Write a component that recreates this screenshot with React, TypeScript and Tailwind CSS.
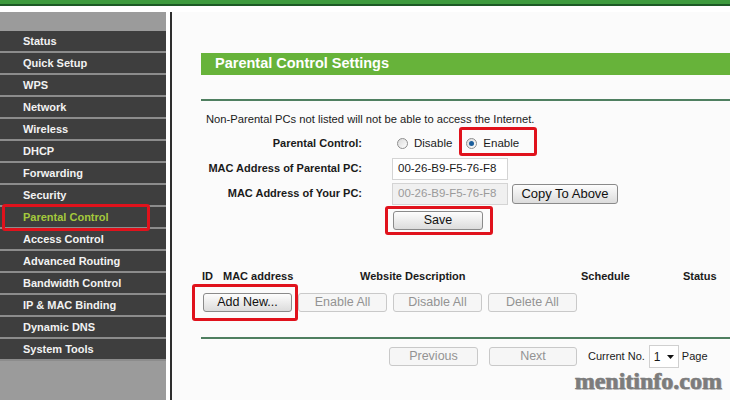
import React from "react";

const menu = [
  "Status",
  "Quick Setup",
  "WPS",
  "Network",
  "Wireless",
  "DHCP",
  "Forwarding",
  "Security",
  "Parental Control",
  "Access Control",
  "Advanced Routing",
  "Bandwidth Control",
  "IP & MAC Binding",
  "Dynamic DNS",
  "System Tools",
];

function Btn({
  children,
  className = "",
  disabled = false,
}: {
  children: React.ReactNode;
  className?: string;
  disabled?: boolean;
}) {
  return (
    <div
      className={
        "flex items-center justify-center rounded-[3px] border " +
        (disabled
          ? "border-[#c9c9c9] bg-[#f6f6f6] text-[#939393] "
          : "border-[#8a8a8a] bg-linear-to-b from-[#fdfdfd] to-[#dcdcdc] text-[#111] ") +
        className
      }
    >
      {children}
    </div>
  );
}

function Radio({ checked = false }: { checked?: boolean }) {
  return (
    <span className="flex h-[11px] w-[11px] items-center justify-center rounded-full border border-[#8e8e8e] bg-linear-to-br from-[#d9d9d9] to-[#ffffff]">
      {checked && <span className="h-[5px] w-[5px] rounded-full bg-[#1b5e9c]" />}
    </span>
  );
}

function RedBox({ className }: { className: string }) {
  return <div className={"absolute rounded-[3px] border-[3px] border-[#e0121c] " + className} />;
}

export default function App() {
  return (
    <div className="relative flex h-[400px] w-[730px] flex-col overflow-hidden bg-[#fbfbfb] font-['Liberation_Sans',Arial,sans-serif] text-[#1a1a1a]">
      <div className="h-[4px] bg-[#3e9b3e]" />
      <div className="h-[2px] bg-[#1d5a26]" />
      <div className="h-[6px] bg-white" />

      <div className="flex flex-1">
        {/* sidebar */}
        <div className="flex w-[166px] flex-col bg-[#9b9b9b]">
          <div className="h-[19px]" />
          {menu.map((m) => (
            <div key={m} className="h-[22px] border-b-2 border-[#8c8c8c] bg-[#3e3e3e]">
              <div
                className={
                  "flex h-[20px] items-center pl-[23px] text-[11px] font-bold " +
                  (m === "Parental Control" ? "text-[#a4c93c]" : "text-[#f2f2f2]")
                }
              >
                {m}
              </div>
            </div>
          ))}
        </div>
        <div className="w-[4px] bg-white" />
        <div className="w-[2px] bg-[#2e2e2e]" />

        {/* content */}
        <div className="flex flex-1 flex-col pl-[29px]">
          <div className="mt-[41px] flex h-[22px] items-center bg-[#67b33a] pl-[14px] text-[14.5px] font-bold text-white">
            Parental Control Settings
          </div>
          <div className="mt-[24px] h-[2px] bg-[#4f7f60]" />

          <div className="mt-[11px] ml-[5px] text-[11.2px] leading-[14px]">
            Non-Parental PCs not listed will not be able to access the Internet.
          </div>

          <div className="mt-[5px] flex h-[25px] items-center">
            <div className="w-[161px] text-right text-[11px] font-bold">Parental Control:</div>
            <div className="ml-[35px] flex items-center text-[11.5px]">
              <Radio />
              <span className="ml-[6px]">Disable</span>
              <span className="ml-[14px]">
                <Radio checked />
              </span>
              <span className="ml-[6px]">Enable</span>
            </div>
          </div>

          <div className="flex h-[25px] items-center">
            <div className="w-[161px] text-right text-[11px] font-bold">MAC Address of Parental PC:</div>
            <div className="ml-[30px] flex h-[22px] w-[116px] items-center border border-[#d4d4d4] bg-white pl-[5px] text-[11.5px]">
              00-26-B9-F5-76-F8
            </div>
          </div>

          <div className="flex h-[25px] items-center">
            <div className="w-[161px] text-right text-[11px] font-bold">MAC Address of Your PC:</div>
            <div className="ml-[30px] flex h-[22px] w-[116px] items-center border border-[#d4d4d4] bg-[#f0f0f0] pl-[5px] text-[11.5px] text-[#9a9a9a]">
              00-26-B9-F5-76-F8
            </div>
            <Btn className="ml-[4px] h-[20px] w-[106px] text-[13px]">Copy To Above</Btn>
          </div>

          <div className="flex h-[26px] items-center pt-[3px]">
            <Btn className="ml-[192px] h-[19px] w-[90px] text-[12.5px]">Save</Btn>
          </div>

          <div className="mt-[37px] flex text-[11px] font-bold leading-[14px]">
            <span className="ml-[1px] w-[21px]">ID</span>
            <span className="w-[137px]">MAC address</span>
            <span className="w-[221px]">Website Description</span>
            <span className="w-[102px]">Schedule</span>
            <span>Status</span>
          </div>

          <div className="mt-[10px] ml-[2px] flex gap-[6px] text-[12.5px]">
            <Btn className="h-[19px] w-[89px]">Add New...</Btn>
            <Btn disabled className="h-[19px] w-[89px]">Enable All</Btn>
            <Btn disabled className="h-[19px] w-[89px]">Disable All</Btn>
            <Btn disabled className="h-[19px] w-[89px]">Delete All</Btn>
          </div>

          <div className="mt-[25px] h-[2px] bg-[#4f7f60]" />

          <div className="mt-[6px] flex h-[23px] items-center">
            <Btn disabled className="ml-[188px] h-[19px] w-[89px] text-[12.5px]">Previous</Btn>
            <Btn disabled className="ml-[11px] h-[19px] w-[88px] text-[12.5px]">Next</Btn>
            <span className="ml-[11px] text-[11px]">Current No.</span>
            <div className="ml-[4px] flex h-[23px] w-[30px] items-center justify-between border border-[#d0d0d0] bg-white px-[4px] text-[12px]">
              <span>1</span>
              <svg width="7" height="4" viewBox="0 0 7 4">
                <path d="M0 0h7L3.5 4z" fill="#111" />
              </svg>
            </div>
            <span className="ml-[3px] text-[11px]">Page</span>
          </div>
        </div>
      </div>

      <div className="absolute right-[8px] bottom-[6px] font-['Liberation_Serif',serif] text-[24px] leading-[26px] font-bold text-[#7c7c7c] [-webkit-text-stroke:0.7px_#7c7c7c] [text-shadow:1px_1px_0_#d0d0d0]">
        menitinfo.com
      </div>

      <RedBox className="left-[2px] top-[204px] h-[27px] w-[148px]" />
      <RedBox className="left-[459px] top-[127px] h-[29px] w-[78px]" />
      <RedBox className="left-[385px] top-[206px] h-[29px] w-[108px]" />
      <RedBox className="left-[192px] top-[284px] h-[37px] w-[106px]" />
    </div>
  );
}
